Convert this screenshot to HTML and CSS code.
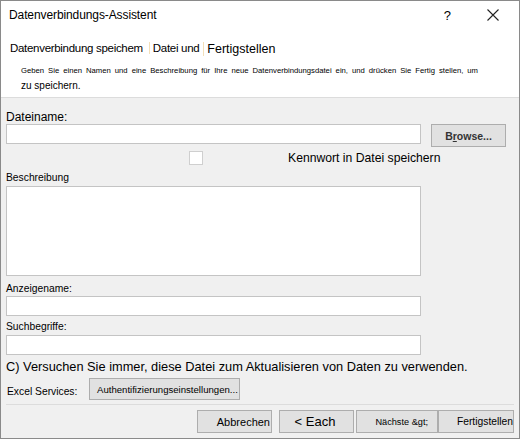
FILE: index.html
```html
<!DOCTYPE html>
<html lang="de">
<head>
    <meta charset="UTF-8">
    <meta name="viewport" content="width=device-width, initial-scale=1.0">
    <title>Datenverbindungs-Assistent</title>
    <link rel="stylesheet" href="styles.css">
</head>
<body>
    <div class="window">
        <div class="titlebar">
            <span class="title">Datenverbindungs-Assistent</span>
            <span class="help">?</span>
            <svg class="close" width="12" height="12" viewBox="0 0 12 12">
                <path d="M0.5 0.5 L11.5 11.5 M11.5 0.5 L0.5 11.5" stroke="#222" stroke-width="1.1" fill="none"/>
            </svg>
        </div>
        <div class="header">
            <div class="steps">
                <span class="step">Datenverbindung speichem</span>
                <span class="step step-sep">Datei und</span>
                <span class="step step-sep step-last">Fertigstellen</span>
            </div>
            <p class="intro">
                <span class="intro-line">Geben Sie einen Namen und eine Beschreibung für Ihre neue Datenverbindungsdatei ein, und drücken Sie Fertig stellen, um</span>
                <span class="intro-end">zu speichern.</span>
            </p>
        </div>
        <div class="content">
            <label class="label label-big" for="fileName">Dateiname:</label>
            <div class="file-row">
                <input type="text" id="fileName" class="field">
                <button class="btn btn-browse">B<u>r</u>owse...</button>
            </div>
            <div class="check-row">
                <span class="checkbox"></span>
                <span class="check-label">Kennwort in Datei speichern</span>
            </div>
            <label class="label label-desc" for="description">Beschreibung</label>
            <textarea id="description" class="field area"></textarea>
            <label class="label label-gap" for="displayName">Anzeigename:</label>
            <input type="text" id="displayName" class="field">
            <label class="label label-gap2" for="keywords">Suchbegriffe:</label>
            <input type="text" id="keywords" class="field">
            <div class="always">C) Versuchen Sie immer, diese Datei zum Aktualisieren von Daten zu verwenden.</div>
            <div class="services-row">
                <span class="services-label">Excel Services:</span>
                <button class="btn btn-auth">Authentifizierungseinstellungen...</button>
            </div>
            <div class="footer">
                <button class="btn btn-cancel">Abbrechen</button>
                <button class="btn btn-back">&lt; Each</button>
                <button class="btn btn-next">Nächste &amp;gt;</button>
                <button class="btn btn-finish">Fertigstellen</button>
            </div>
        </div>
    </div>
</body>
</html>
```

FILE: styles.css
```css
body {
    margin: 0;
    font-family: "Liberation Sans", Arial, sans-serif;
    color: #000;
    background-color: #fff;
}
.window {
    width: 520px;
    height: 439px;
    box-sizing: border-box;
    border: 1px solid #8a8a8a;
    background-color: #f0f0f0;
    overflow: hidden;
}
.titlebar {
    display: flex;
    align-items: center;
    height: 28px;
    padding-left: 8px;
    background-color: #fff;
    font-size: 12px;
    letter-spacing: -0.1px;
}
.title {
    flex: 1;
}
.help {
    font-size: 13px;
    margin-right: 36px;
}
.close {
    margin-right: 20px;
}
.header {
    background-color: #fff;
    height: 68px;
    border-bottom: 1px solid #dcdcdc;
}
.steps {
    display: flex;
    align-items: baseline;
    padding: 12px 0 0 9px;
    height: 18px;
    font-size: 11.5px;
    letter-spacing: -0.3px;
}
.step-sep {
    border-left: 1px solid #f3dfb8;
    padding-left: 3px;
    margin-left: 6px;
}
.step-last {
    font-size: 12.5px;
    letter-spacing: 0;
    margin-left: 4px;
    position: relative;
    top: 1px;
}
.intro {
    margin: 4px 0 0 20px;
    width: 457px;
}
.intro-line {
    display: block;
    height: 15px;
    line-height: 15px;
    font-size: 7.7px;
    white-space: nowrap;
    text-align: justify;
    text-align-last: justify;
}
.intro-end {
    display: block;
    line-height: 16px;
    font-size: 10px;
}
.content {
    padding: 12px 5px 0 5px;
}
.label {
    display: block;
    height: 14px;
    line-height: 14px;
    font-size: 10.3px;
}
.label-big {
    font-size: 12px;
}
.label-desc {
    margin-top: 6px;
    margin-bottom: 1px;
}
.label-gap {
    margin-top: 6px;
}
.label-gap2 {
    margin-top: 4px;
    margin-bottom: 1px;
}
.field {
    display: block;
    width: 415px;
    height: 20px;
    margin: 0;
    padding: 0 3px;
    box-sizing: border-box;
    border: 1px solid #c4c4c4;
    background-color: #fff;
    font-family: inherit;
    font-size: 12px;
}
.area {
    height: 90px;
    resize: none;
}
.file-row {
    display: flex;
    align-items: flex-start;
}
.btn {
    height: 23px;
    padding: 0;
    box-sizing: border-box;
    border: 1px solid #adadad;
    background-color: #e1e1e1;
    font-family: inherit;
    font-size: 11px;
    color: #000;
}
.btn-browse {
    width: 75px;
    margin-left: 10px;
    font-weight: bold;
    font-size: 10.5px;
    color: #333;
}
.check-row {
    display: flex;
    align-items: center;
    height: 14px;
    margin-top: 4px;
}
.checkbox {
    width: 14px;
    height: 14px;
    margin-left: 183px;
    box-sizing: border-box;
    border: 1px solid #cfcfcf;
    background-color: #fff;
}
.check-label {
    margin-left: 85px;
    font-size: 12.2px;
}
.always {
    margin-top: 3px;
    height: 18px;
    line-height: 18px;
    font-size: 12.8px;
}
.services-row {
    display: flex;
    align-items: center;
    margin-top: 2px;
}
.services-label {
    width: 82px;
    padding-left: 1px;
    font-size: 10.3px;
    position: relative;
    top: 2px;
}
.btn-auth {
    width: 151px;
    height: 22px;
    text-align: left;
    padding-left: 7px;
    font-size: 9.6px;
}
.footer {
    display: flex;
    justify-content: flex-end;
    margin-top: 4px;
    padding-top: 5px;
    border-top: 1px solid #dcdcdc;
}
.btn-cancel {
    width: 75px;
    text-align: right;
    padding-right: 1px;
}
.btn-back {
    width: 75px;
    margin-left: 7px;
    font-size: 13px;
    padding-right: 3px;
}
.btn-next {
    width: 82px;
    margin-left: 2px;
    text-align: right;
    padding-right: 9px;
    font-size: 9.2px;
}
.btn-finish {
    width: 76px;
    text-align: right;
    padding-right: 0;
    white-space: nowrap;
    font-size: 10.3px;
}
```
